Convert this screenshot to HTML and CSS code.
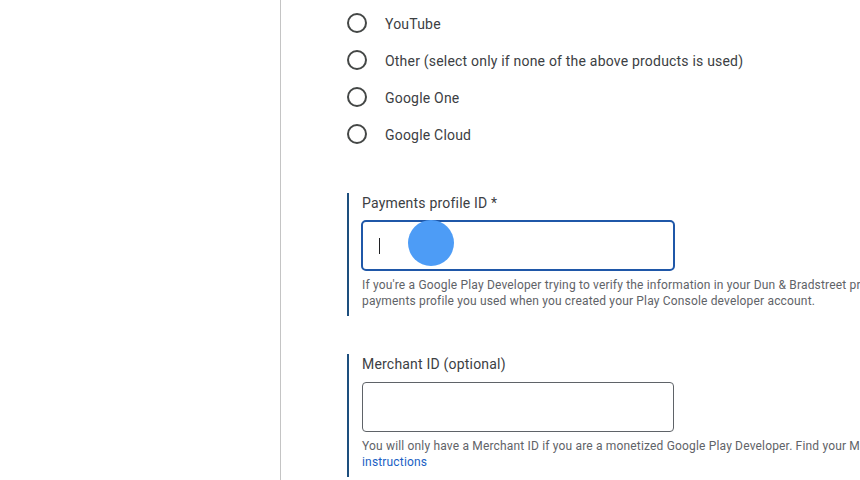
FILE: index.html
```html
<!DOCTYPE html>
<html>
<head>
<meta charset="utf-8">
<link rel="stylesheet" href="styles.css">
</head>
<body>
<div class="page">
  <aside class="sidebar"></aside>
  <main class="main">
    <ul class="radios">
      <li class="radio-row"><span class="radio"></span><span class="radio-label">YouTube</span></li>
      <li class="radio-row"><span class="radio"></span><span class="radio-label">Other (select only if none of the above products is used)</span></li>
      <li class="radio-row"><span class="radio"></span><span class="radio-label">Google One</span></li>
      <li class="radio-row"><span class="radio"></span><span class="radio-label">Google Cloud</span></li>
    </ul>

    <section class="field field-first">
      <label class="field-label">Payments profile ID *</label>
      <div class="input input-focused">
        <span class="caret"></span>
        <span class="touch-dot"></span>
      </div>
      <p class="helper">
        <span class="line">If you're a Google Play Developer trying to verify the information in your Dun &amp; Bradstreet pr</span>
        <span class="line">payments profile you used when you created your Play Console developer account.</span>
      </p>
    </section>

    <section class="field field-second">
      <label class="field-label">Merchant ID (optional)</label>
      <div class="input"></div>
      <p class="helper">
        <span class="line">You will only have a Merchant ID if you are a monetized Google Play Developer. Find your Me</span>
        <span class="line"><a class="link" href="#">instructions</a></span>
      </p>
    </section>
  </main>
</div>
</body>
</html>
```

FILE: styles.css
```css
html, body {
  margin: 0;
  padding: 0;
  background: #ffffff;
  overflow: hidden;
}

body {
  font-family: Roboto, "Liberation Sans", Arial, sans-serif;
  color: #3c4043;
  width: 860px;
  height: 480px;
}

.page {
  display: flex;
  height: 480px;
}

.sidebar {
  flex: 0 0 280px;
  border-right: 1px solid #c4c4c4;
  height: 480px;
}

.main {
  flex: 1 1 auto;
  padding-left: 66px;
  min-width: 0;
  overflow: hidden;
}

.radios {
  list-style: none;
  margin: 4px 0 0 0;
  padding: 0;
}

.radio-row {
  display: flex;
  align-items: center;
  height: 37px;
  gap: 18px;
}

.radio {
  width: 20px;
  height: 20px;
  box-sizing: border-box;
  border: 2px solid #444746;
  border-radius: 50%;
  flex: 0 0 20px;
}

.radio-label {
  font-size: 14px;
  line-height: 20px;
  padding-top: 2px;
  letter-spacing: 0.2px;
  color: #3c4043;
  white-space: nowrap;
}

.field {
  border-left: 2px solid #1d4f7e;
  padding-left: 13px;
  padding-bottom: 7px;
}

.field-first {
  margin-top: 41px;
}

.field-second {
  margin-top: 38px;
}

.field-label {
  display: block;
  font-size: 14px;
  line-height: 20px;
  letter-spacing: 0.2px;
  color: #3c4043;
}

.input {
  position: relative;
  margin-top: 8px;
  width: 312px;
  height: 50px;
  box-sizing: border-box;
  border: 1px solid #5f6368;
  border-radius: 4px;
}

.input-focused {
  border: 2px solid #1f57a8;
  width: 314px;
  height: 51px;
  margin-left: -1px;
  margin-top: 7px;
  border-radius: 5px;
}

.caret {
  position: absolute;
  left: 16px;
  top: 16px;
  width: 1px;
  height: 16px;
  background: #202124;
}

.touch-dot {
  position: absolute;
  left: 45px;
  top: -2px;
  width: 46px;
  height: 46px;
  border-radius: 50%;
  background: #4d9cf6;
}

.helper {
  margin: 6px 0 0 0;
  font-size: 12px;
  line-height: 16px;
  letter-spacing: 0.17px;
  color: #5f6368;
}

.line {
  display: block;
  white-space: nowrap;
}

.link {
  color: #1a5fc4;
  text-decoration: none;
}
```
